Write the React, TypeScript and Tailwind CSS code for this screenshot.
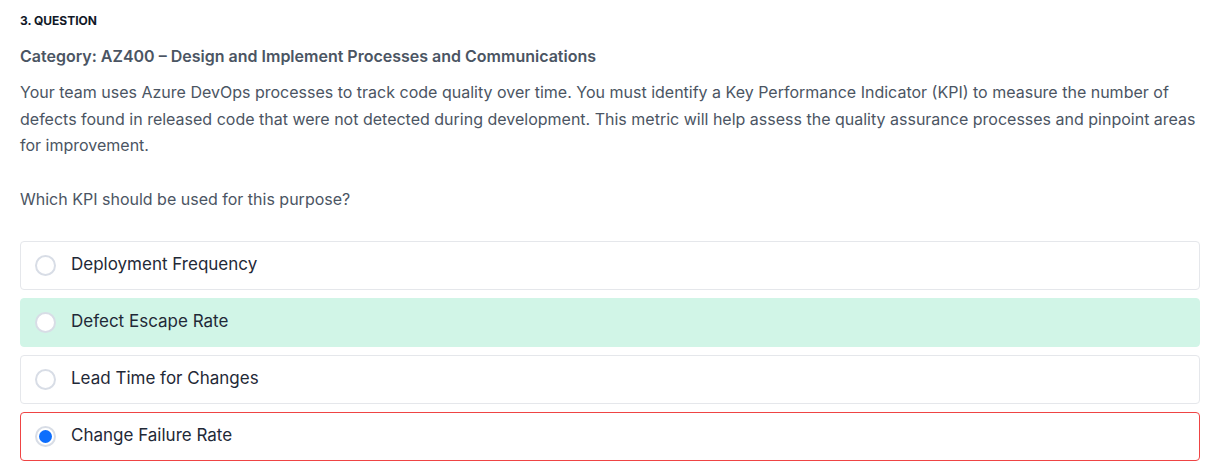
import React from "react";

const options = [
  { label: "Deployment Frequency", state: "none" },
  { label: "Defect Escape Rate", state: "correct" },
  { label: "Lead Time for Changes", state: "none" },
  { label: "Change Failure Rate", state: "wrong" },
];

export default function App() {
  return (
    <div className="bg-white w-[1220px] h-[474px] px-5 pt-[13px]" style={{ fontFamily: "Inter, 'Noto Sans', sans-serif" }}>
      <div className="text-[12px] font-bold text-[#111827] leading-[16px] uppercase">3. Question</div>
      <div className="mt-[16px] text-[16px] font-semibold text-[#4b5563] leading-[22px]">
        Category: AZ400 – Design and Implement Processes and Communications
      </div>
      <p className="mt-[12px] text-[16px] text-[#4b5563] leading-[26.5px]">
        Your team uses Azure DevOps processes to track code quality over time. You must identify a Key Performance Indicator (KPI) to measure the number of defects found in released code that were not detected during development. This metric will help assess the quality assurance processes and pinpoint areas for improvement.
      </p>
      <p className="mt-[27px] text-[16px] text-[#4b5563] leading-[26px]">Which KPI should be used for this purpose?</p>
      <div className="mt-[29px] flex flex-col gap-[8px] w-[1180px]">
        {options.map((o) => (
          <div
            key={o.label}
            className={
              "h-[49px] rounded-[4px] flex items-center pl-[14px] border " +
              (o.state === "correct"
                ? "bg-[#d1f5e7] border-[#d1f5e7]"
                : o.state === "wrong"
                ? "bg-white border-[#ef4444]"
                : "bg-white border-[#e5e7eb]")
            }
          >
            <span
              className={
                "w-[21px] h-[21px] rounded-full border-2 border-[#d8dde6] bg-white flex items-center justify-center shrink-0"
              }
            >
              {o.state === "wrong" && <span className="w-[13px] h-[13px] rounded-full bg-[#0d6efd]" />}
            </span>
            <span className="ml-[15px] text-[17px] text-[#1f2937]">{o.label}</span>
          </div>
        ))}
      </div>
    </div>
  );
}
